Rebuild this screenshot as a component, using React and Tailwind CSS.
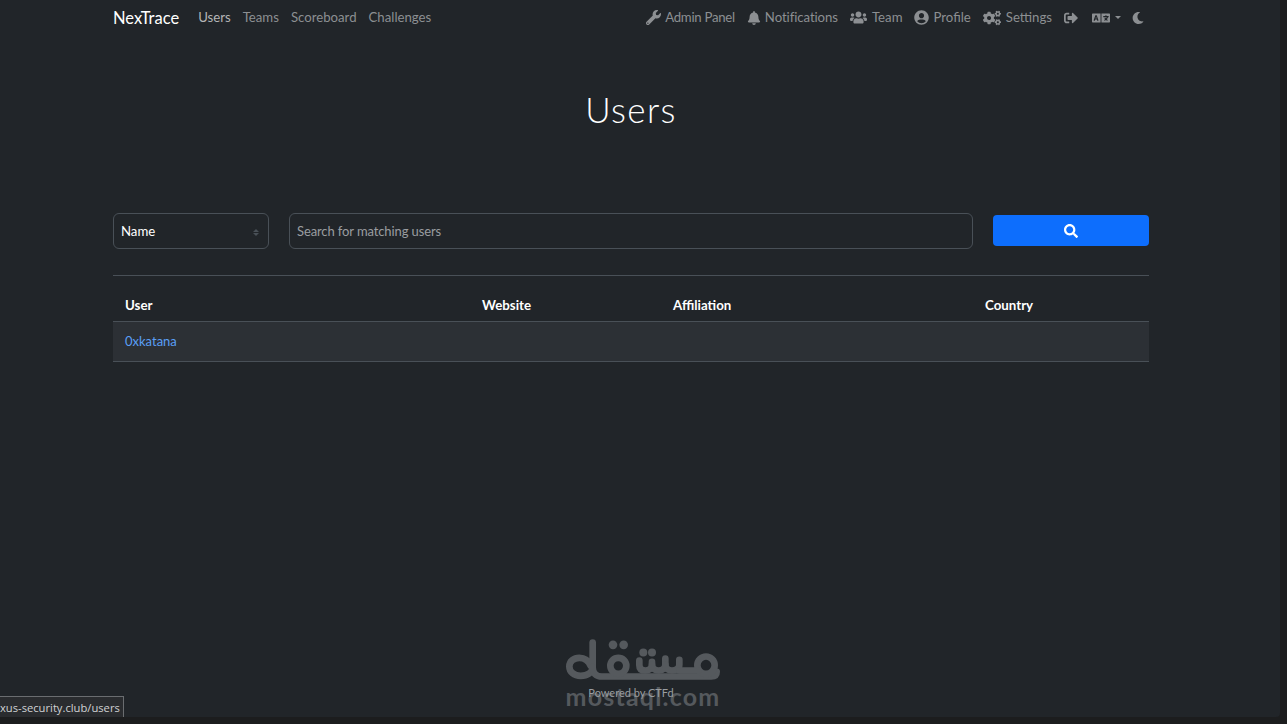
import React from "react";
import {
  FaWrench,
  FaBell,
  FaUsers,
  FaUserCircle,
  FaCogs,
  FaSignOutAlt,
  FaLanguage,
  FaMoon,
  FaSearch,
} from "react-icons/fa";

const leftLinks = [
  { label: "Users", className: "text-[#b4b5b6]" },
  { label: "Teams", className: "text-[#8c8f92]" },
  { label: "Scoreboard", className: "text-[#8c8f92]" },
  { label: "Challenges", className: "text-[#8c8f92]" },
];

const rightLinks = [
  { label: "Admin Panel", icon: FaWrench, size: 15, gap: "gap-[4px] tracking-[-0.27px]" },
  { label: "Notifications", icon: FaBell, size: 14, gap: "gap-[4px] tracking-[-0.08px]" },
  { label: "Team", icon: FaUsers, size: 17, gap: "gap-[5px]" },
  { label: "Profile", icon: FaUserCircle, size: 15, gap: "gap-[4px]" },
  { label: "Settings", icon: FaCogs, size: 18, gap: "gap-[5px]" },
];

function Navbar() {
  return (
    <nav className="mx-auto flex h-[36px] w-[1036px] items-center text-[13.2px] text-[#8c8f92]">
      <span className="mr-[19px] text-[16.5px] text-white">NexTrace</span>
      <div className="flex gap-[12px]">
        {leftLinks.map((link) => (
          <a key={link.label} className={link.className}>
            {link.label}
          </a>
        ))}
      </div>
      <div className="ml-auto flex items-center pr-[5px]">
        <div className="flex items-center gap-[12px]">
          {rightLinks.map((link) => (
            <a key={link.label} className={"flex items-center " + link.gap}>
              <link.icon size={link.size} />
              {link.label}
            </a>
          ))}
          <FaSignOutAlt size={14} />
        </div>
        <span className="ml-[14px] flex items-center gap-[5px]">
          <FaLanguage size={18} />
          <span className="h-0 w-0 border-x-[3px] border-t-[3px] border-x-transparent border-t-[#8c8f92]" />
        </span>
        <FaMoon size={12} className="ml-[11px]" />
      </div>
    </nav>
  );
}

function SearchForm() {
  return (
    <div className="flex items-start">
      <div className="flex h-[36px] w-[156px] items-center justify-between rounded-[6px] border border-[#495057] pt-[2px] pr-[9px] pl-[7px] text-[13.2px] text-white">
        Name
        <span className="flex flex-col gap-[1px]">
          <span className="h-0 w-0 border-x-[3px] border-b-[3px] border-x-transparent border-b-[#495057]" />
          <span className="h-0 w-0 border-x-[3px] border-t-[3px] border-x-transparent border-t-[#495057]" />
        </span>
      </div>
      <div className="ml-[20px] flex h-[36px] w-[684px] items-center rounded-[6px] border border-[#495057] px-[7px] pt-[2px] text-[13px] tracking-[-0.11px] text-[#9a9da0]">
        Search for matching users
      </div>
      <button className="mt-[2px] ml-[20px] flex h-[31px] w-[156px] items-center justify-center rounded-[4px] bg-[#0d6efd] text-white">
        <FaSearch size={14} />
      </button>
    </div>
  );
}

function UsersTable() {
  return (
    <table className="w-full table-fixed text-[13.3px]">
      <thead>
        <tr className="h-[45px] border-b border-[#495057] text-left text-white">
          <th className="w-[357px] pt-[15px] pl-[12px] font-bold">User</th>
          <th className="w-[191px] pt-[15px] pl-[12px] font-bold">Website</th>
          <th className="w-[312px] pt-[15px] pl-[12px] font-bold">Affiliation</th>
          <th className="pt-[15px] pl-[12px] font-bold">Country</th>
        </tr>
      </thead>
      <tbody>
        <tr className="h-[40px] border-b border-[#495057] bg-[#2c3035]">
          <td className="pt-[1px] pl-[12px] text-[13px] text-[#5a9ff5]">0xkatana</td>
          <td />
          <td />
          <td />
        </tr>
      </tbody>
    </table>
  );
}

// watermark in the lower middle of the screenshot
function MostaqlMark() {
  return (
    <svg width="154" height="41" viewBox="48 28 462 122" fill="none" className="text-[#55595d]">
      <g stroke="currentColor" strokeWidth="20" strokeLinecap="round" strokeLinejoin="round">
        <path d="M128 38V112C128 128 112 138 92 138C72 138 58 126 58 110C58 94 72 84 88 84C104 84 116 94 122 108" />
        <path d="M128 112C128 130 138 140 156 140H484C496 140 500 134 500 126" />
        <circle cx="205" cy="108" r="24" />
        <path d="M268 92V106C268 118 276 122 286 122C298 122 306 116 306 104V96" />
        <path d="M306 104C306 116 314 122 326 122C338 122 346 116 346 104V86" />
        <path d="M346 104C346 116 354 122 366 122C380 122 388 116 388 104V90" />
        <circle cx="468" cy="106" r="26" />
        <path d="M388 122H444" />
      </g>
      <g fill="currentColor">
        <circle cx="189" cy="45" r="13" />
        <circle cx="221" cy="45" r="13" />
        <circle cx="280" cy="68" r="12" />
        <circle cx="306" cy="68" r="12" />
      </g>
    </svg>
  );
}

export default function App() {
  return (
    <div className="h-[724px] overflow-hidden bg-[#1c1d1e]">
      <div className="relative flex h-[717px] w-[1280px] flex-col rounded-br-[4px] bg-[#212529] font-['Lato',sans-serif]">
        <div className="flex w-[1262px] flex-col">
          <Navbar />
          <h1 className="mt-[53px] text-center text-[35px] leading-[40px] font-light tracking-[1.4px] text-white">
            Users
          </h1>
          <main className="mx-auto mt-[84px] w-[1036px]">
            <SearchForm />
            <hr className="mt-[26px] border-[#495057]" />
            <UsersTable />
          </main>
        </div>
        <div className="absolute top-[639px] left-[566px] flex w-[154px] flex-col items-center">
          <MostaqlMark />
          <span className="mt-[5px] text-[25px] leading-[22px] font-bold tracking-[1.2px] whitespace-nowrap text-[#55595d]">mostaql.com</span>
        </div>
        <footer className="absolute top-[686px] w-[1262px] text-center text-[11px] leading-[14px] text-[#9a9da0]">
          Powered by CTFd
        </footer>
        <div className="absolute top-[696px] left-0 flex h-[21px] w-[124px] items-center overflow-hidden border-t border-r border-[#6a6d70] bg-[#2a2c2f] pt-[2px] font-['Open_Sans',sans-serif] text-[11.2px] whitespace-nowrap text-[#d0d2d4]">
          xus-security.club/users
        </div>
      </div>
    </div>
  );
}
